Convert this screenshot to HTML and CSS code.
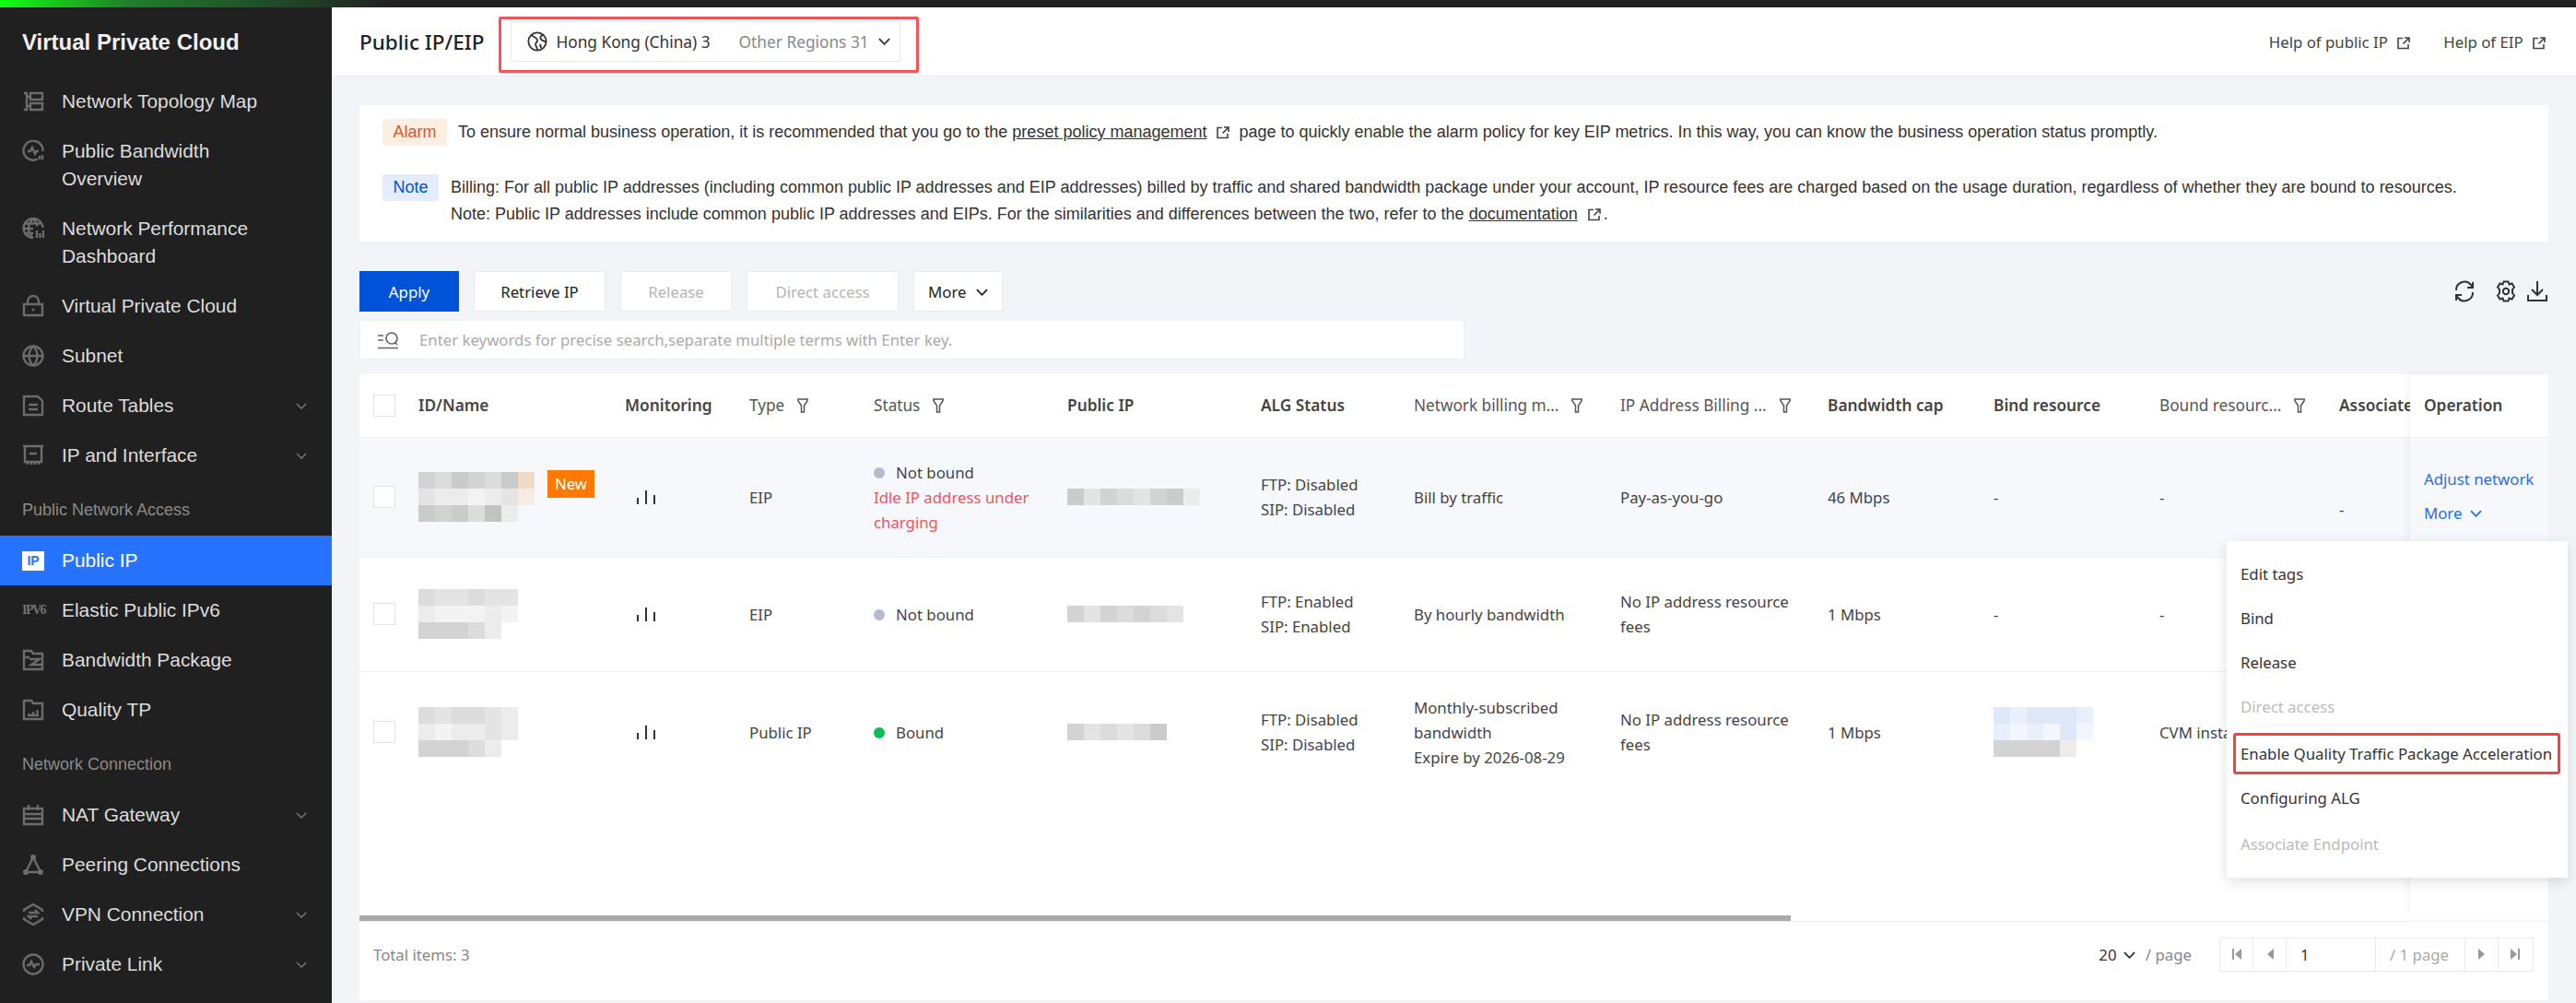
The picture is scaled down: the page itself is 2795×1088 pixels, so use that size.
FILE: index.html
```html
<!DOCTYPE html>
<html lang="en">
<head>
    <meta charset="UTF-8">
    <title>Public IP/EIP</title>
    <link rel="stylesheet" href="styles.css">
</head>
<body>
    <div class="topbar"></div>
    <div class="app">
        <nav class="sidebar">
            <div class="side-title">Virtual Private Cloud</div>
            <a class="side-item">
                <svg class="side-icon" viewBox="0 0 24 24"><path d="M2 3h3v18H2M5 7h3M5 17h3M9 3h13v7H9zM9 14h13v7H9z"/></svg>
                <span>Network Topology Map</span>
            </a>
            <a class="side-item double">
                <svg class="side-icon" viewBox="0 0 24 24"><path d="M17 20.500A10.500 10.500 0 1 1 22.500 12M6 12h3l2-4 3 7 1.500-3H18M19 17v4M22 16v5"/></svg>
                <span>Public Bandwidth<br>Overview</span>
            </a>
            <a class="side-item double">
                <svg class="side-icon" viewBox="0 0 24 24"><path d="M12 22A10.500 10.500 0 1 1 22.500 11M12 1.500C8 5 7 9 7 12s1 7 5 10M12 1.500c3 2 4 5 4.500 8M2 12h10M3 6.500h17M3 17h9M16 14v8M19.500 17v5M23 14v8"/></svg>
                <span>Network Performance<br>Dashboard</span>
            </a>
            <a class="side-item">
                <svg class="side-icon" viewBox="0 0 24 24"><path d="M2 10h20v12H2zM6 10V7a6 6 0 0 1 12 0v3"/><circle class="solid" cx="12" cy="16" r="1.500"/></svg>
                <span>Virtual Private Cloud</span>
            </a>
            <a class="side-item">
                <svg class="side-icon" viewBox="0 0 24 24"><circle cx="12" cy="12" r="10.500"/><path d="M1.500 12h21M12 1.500c-6 6-6 15 0 21M12 1.500c6 6 6 15 0 21"/></svg>
                <span>Subnet</span>
            </a>
            <a class="side-item">
                <svg class="side-icon" viewBox="0 0 24 24"><path d="M2 2h15l5 5v15H2zM7 11h10M7 16h10"/></svg>
                <span>Route Tables</span>
                <svg class="side-arrow" viewBox="0 0 14 8"><path d="M1 1l6 6 6-6"/></svg>
            </a>
            <a class="side-item">
                <svg class="side-icon" viewBox="0 0 24 24"><path d="M1 2h22M3 2v17h18V2M8 10h8M6 19v3M10 19v3M14 19v3M18 19v3"/></svg>
                <span>IP and Interface</span>
                <svg class="side-arrow" viewBox="0 0 14 8"><path d="M1 1l6 6 6-6"/></svg>
            </a>

            <div class="side-section">Public Network Access</div>
            <a class="side-item active">
                <span class="ip-badge">IP</span>
                <span>Public IP</span>
            </a>
            <a class="side-item">
                <span class="v6-badge">IPv6</span>
                <span>Elastic Public IPv6</span>
            </a>
            <a class="side-item">
                <svg class="side-icon" viewBox="0 0 24 24"><path d="M2 2h8l2 3h10v17H2zM2 9h6M8 11h11l-9 6h11"/></svg>
                <span>Bandwidth Package</span>
            </a>
            <a class="side-item">
                <svg class="side-icon" viewBox="0 0 24 24"><path d="M2 2h8l2 3h10v17H2zM6 18h12M7.500 18v-2M12 18v-4M16.500 18v-6"/></svg>
                <span>Quality TP</span>
            </a>

            <div class="side-section">Network Connection</div>
            <a class="side-item">
                <svg class="side-icon" viewBox="0 0 24 24"><path d="M2 5h20v17H2zM7 1v6M17 1v6M2 11h20M2 16h20"/></svg>
                <span>NAT Gateway</span>
                <svg class="side-arrow" viewBox="0 0 14 8"><path d="M1 1l6 6 6-6"/></svg>
            </a>
            <a class="side-item">
                <svg class="side-icon" viewBox="0 0 24 24"><path d="M12 4L4 20h16z"/><circle class="solid" cx="12" cy="4" r="3"/><circle class="solid" cx="4" cy="20" r="3"/><circle class="solid" cx="20" cy="20" r="3"/></svg>
                <span>Peering Connections</span>
            </a>
            <a class="side-item">
                <svg class="side-icon" viewBox="0 0 24 24"><path d="M2 9V7l10-6 10 6v2M2 15v2l10 6 10-6v-2M7 10h10l-3-3M17 14H7l3 3"/></svg>
                <span>VPN Connection</span>
                <svg class="side-arrow" viewBox="0 0 14 8"><path d="M1 1l6 6 6-6"/></svg>
            </a>
            <a class="side-item">
                <svg class="side-icon" viewBox="0 0 24 24"><circle cx="12" cy="12" r="10.500"/><path d="M5 13h3l2-4 3 6 2-3h4"/></svg>
                <span>Private Link</span>
                <svg class="side-arrow" viewBox="0 0 14 8"><path d="M1 1l6 6 6-6"/></svg>
            </a>
        </nav>

        <main class="main">
            <header class="page-head">
                <h1>Public IP/EIP</h1>
                <div class="region-mark">
                    <div class="region">
                        <svg class="globe" viewBox="0 0 24 24"><circle cx="12" cy="12" r="10.500"/><path d="M5 4c2 3 6 3 7 6s-3 3-2 6 2 3 2 6M19 4c-3 1-4 3-3 5s5 2 6 4M16 15c-1 2 0 4 1 5"/></svg>
                        <span class="region-now">Hong Kong (China) 3</span>
                        <span class="region-other">Other Regions 31</span>
                        <svg class="chev" viewBox="0 0 14 8"><path d="M1 1l6 6 6-6"/></svg>
                    </div>
                </div>
                <div class="help-links">
                    <a>Help of public IP <svg class="ext" viewBox="0 0 14 14"><path d="M6 1.500H1v11h11V8M8 1h5v5M13 1L6.500 7.500"/></svg></a>
                    <a>Help of EIP <svg class="ext" viewBox="0 0 14 14"><path d="M6 1.500H1v11h11V8M8 1h5v5M13 1L6.500 7.500"/></svg></a>
                </div>
            </header>

            <section class="notice">
                <div class="notice-row alarm">
                    <span class="tag tag-alarm">Alarm</span>
                    <p>To ensure normal business operation, it is recommended that you go to the <u>preset policy management</u><svg class="ext" viewBox="0 0 14 14"><path d="M6 1.500H1v11h11V8M8 1h5v5M13 1L6.500 7.500"/></svg>page to quickly enable the alarm policy for key EIP metrics. In this way, you can know the business operation status promptly.</p>
                </div>
                <div class="notice-row">
                    <span class="tag tag-note">Note</span>
                    <p>Billing: For all public IP addresses (including common public IP addresses and EIP addresses) billed by traffic and shared bandwidth package under your account, IP resource fees are charged based on the usage duration, regardless of whether they are bound to resources.<br>Note: Public IP addresses include common public IP addresses and EIPs. For the similarities and differences between the two, refer to the <u>documentation</u><svg class="ext tight" viewBox="0 0 14 14"><path d="M6 1.500H1v11h11V8M8 1h5v5M13 1L6.500 7.500"/></svg>.</p>
                </div>
            </section>

            <div class="toolbar">
                <button class="btn primary w-apply">Apply</button>
                <button class="btn w-retrieve">Retrieve IP</button>
                <button class="btn off w-release">Release</button>
                <button class="btn off w-direct">Direct access</button>
                <button class="btn w-more">More <svg class="chev" viewBox="0 0 14 8"><path d="M1 1l6 6 6-6"/></svg></button>
                <div class="tools">
                    <svg class="tool refresh" viewBox="0 0 24 24"><path d="M3 11a9 9 0 0 1 16-6l2 3M21 2v6h-6M21 13a9 9 0 0 1-16 6l-2-3M3 22v-6h6"/></svg>
                    <svg class="tool gear" viewBox="0 0 24 24"><path d="M9.500 1.500h5l1 3 3-1 2.500 4-2 2.500v4l2 2.500-2.500 4-3-1-1 3h-5l-1-3-3 1L3 16.500 5 14v-4L3 7.500l2.500-4 3 1z"/><circle cx="12" cy="12" r="3.200"/></svg>
                    <svg class="tool save" viewBox="0 0 24 24"><path d="M12 1v15M6 10l6 6 6-6M2 16v6h20v-6"/></svg>
                </div>
            </div>

            <div class="search">
                <svg class="search-icon" viewBox="0 0 24 20"><path d="M1 5h6M1 10h6M1 18.500h22M10 8a6 6 0 1 0 12 0a6 6 0 1 0-12 0M19 12l3 3"/></svg>
                <span>Enter keywords for precise search,separate multiple terms with Enter key.</span>
            </div>

            <section class="panel">
                <div class="panel-body">
                    <div class="scroll-area">
                        <table class="grid">
                            <colgroup>
                                <col class="c-check"><col class="c-id"><col class="c-mon"><col class="c-type"><col class="c-status"><col class="c-ip"><col class="c-alg"><col class="c-net"><col class="c-bill"><col class="c-cap"><col class="c-bind"><col class="c-bound"><col class="c-assoc">
                            </colgroup>
                            <thead>
                                <tr>
                                    <th class="check-cell"><span class="check"></span></th>
                                    <th>ID/Name</th>
                                    <th>Monitoring</th>
                                    <th class="soft">Type<svg class="funnel" viewBox="0 0 14 16"><path d="M1 1h12M1.500 2l4 6v7h3V8l4-6"/></svg></th>
                                    <th class="soft">Status<svg class="funnel" viewBox="0 0 14 16"><path d="M1 1h12M1.500 2l4 6v7h3V8l4-6"/></svg></th>
                                    <th>Public IP</th>
                                    <th>ALG Status</th>
                                    <th class="soft">Network billing m...<svg class="funnel" viewBox="0 0 14 16"><path d="M1 1h12M1.500 2l4 6v7h3V8l4-6"/></svg></th>
                                    <th class="soft">IP Address Billing ...<svg class="funnel" viewBox="0 0 14 16"><path d="M1 1h12M1.500 2l4 6v7h3V8l4-6"/></svg></th>
                                    <th>Bandwidth cap</th>
                                    <th>Bind resource</th>
                                    <th class="soft">Bound resourc...<svg class="funnel" viewBox="0 0 14 16"><path d="M1 1h12M1.500 2l4 6v7h3V8l4-6"/></svg></th>
                                    <th>Associate</th>
                                </tr>
                            </thead>
                            <tbody>
                                <tr class="row-a hover">
                                    <td class="check-cell"><span class="check tall"></span></td>
                                    <td>
                                        <div class="id-cell">
                                            <div class="mosaic m-7">
                                                <i class="s3"></i><i class="s4"></i><i class="s2"></i><i class="s3"></i><i class="s4"></i><i class="s2"></i><i class="peach"></i>
                                                <i class="s5"></i><i class="s6"></i><i class="s6"></i><i class="s7"></i><i class="s6"></i><i class="s5"></i><i class="pale"></i>
                                                <i class="s2"></i><i class="s3"></i><i class="s2"></i><i class="s4"></i><i class="s1"></i><i class="s6"></i>
                                            </div>
                                            <span class="new">New</span>
                                        </div>
                                    </td>
                                    <td><svg class="bars" viewBox="0 0 20 17"><path d="M1 9v7M10 1v15M19 6v10"/></svg></td>
                                    <td>EIP</td>
                                    <td>
                                        <div><span class="dot grey"></span>Not bound</div>
                                        <div class="warn">Idle IP address under charging</div>
                                    </td>
                                    <td>
                                        <div class="mosaic m-8 strip">
                                            <i class="s2"></i><i class="s5"></i><i class="s3"></i><i class="s4"></i><i class="s5"></i><i class="s3"></i><i class="s2"></i><i class="s6"></i>
                                        </div>
                                    </td>
                                    <td>FTP: Disabled<br>SIP: Disabled</td>
                                    <td>Bill by traffic</td>
                                    <td>Pay-as-you-go</td>
                                    <td>46 Mbps</td>
                                    <td>-</td>
                                    <td>-</td>
                                    <td class="low">-</td>
                                </tr>
                                <tr class="row-b">
                                    <td class="check-cell"><span class="check tall"></span></td>
                                    <td>
                                        <div class="mosaic m-6">
                                            <i class="s4"></i><i class="s5"></i><i class="s5"></i><i class="s4"></i><i class="s5"></i><i class="s5"></i>
                                            <i class="s6"></i><i class="s7"></i><i class="s7"></i><i class="s7"></i><i class="s6"></i><i class="s7"></i>
                                            <i class="s3"></i><i class="s3"></i><i class="s3"></i><i class="s4"></i><i class="s6"></i>
                                        </div>
                                    </td>
                                    <td><svg class="bars" viewBox="0 0 20 17"><path d="M1 9v7M10 1v15M19 6v10"/></svg></td>
                                    <td>EIP</td>
                                    <td><span class="dot grey"></span>Not bound</td>
                                    <td>
                                        <div class="mosaic m-7 strip">
                                            <i class="s3"></i><i class="s5"></i><i class="s3"></i><i class="s4"></i><i class="s3"></i><i class="s4"></i><i class="s5"></i>
                                        </div>
                                    </td>
                                    <td>FTP: Enabled<br>SIP: Enabled</td>
                                    <td>By hourly bandwidth</td>
                                    <td>No IP address resource fees</td>
                                    <td>1 Mbps</td>
                                    <td>-</td>
                                    <td>-</td>
                                    <td></td>
                                </tr>
                                <tr class="row-c">
                                    <td class="check-cell"><span class="check tall"></span></td>
                                    <td>
                                        <div class="mosaic m-6">
                                            <i class="s4"></i><i class="s5"></i><i class="s4"></i><i class="s4"></i><i class="s5"></i><i class="s6"></i>
                                            <i class="s6"></i><i class="s7"></i><i class="s6"></i><i class="s6"></i><i class="s5"></i><i class="s6"></i>
                                            <i class="s3"></i><i class="s3"></i><i class="s3"></i><i class="s4"></i><i class="s6"></i>
                                        </div>
                                    </td>
                                    <td><svg class="bars" viewBox="0 0 20 17"><path d="M1 9v7M10 1v15M19 6v10"/></svg></td>
                                    <td>Public IP</td>
                                    <td><span class="dot green"></span>Bound</td>
                                    <td>
                                        <div class="mosaic m-6 strip">
                                            <i class="s3"></i><i class="s5"></i><i class="s4"></i><i class="s5"></i><i class="s4"></i><i class="s2"></i>
                                        </div>
                                    </td>
                                    <td>FTP: Disabled<br>SIP: Disabled</td>
                                    <td>Monthly-subscribed bandwidth<br>Expire by 2026-08-29</td>
                                    <td>No IP address resource fees</td>
                                    <td>1 Mbps</td>
                                    <td>
                                        <div class="mosaic m-6">
                                            <i class="b2"></i><i class="b3"></i><i class="b2"></i><i class="b2"></i><i class="b2"></i><i class="b3"></i>
                                            <i class="b3"></i><i class="b4"></i><i class="b3"></i><i class="b4"></i><i class="b2"></i><i class="b4"></i>
                                            <i class="s3"></i><i class="s3"></i><i class="s3"></i><i class="s3"></i><i class="s6"></i>
                                        </div>
                                    </td>
                                    <td>CVM instance</td>
                                    <td></td>
                                </tr>
                            </tbody>
                        </table>
                    </div>
                    <div class="op-col">
                        <div class="op-head">Operation</div>
                        <div class="op-row hover">
                            <a>Adjust network</a>
                            <a>More <svg class="chev" viewBox="0 0 14 8"><path d="M1 1l6 6 6-6"/></svg></a>
                        </div>
                    </div>
                </div>
                <div class="scrollbar"><div class="thumb"></div></div>
                <footer class="panel-foot">
                    <span class="total">Total items: 3</span>
                    <div class="pager">
                        <span class="size">20 <svg class="chev" viewBox="0 0 14 8"><path d="M1 1l6 6 6-6"/></svg></span>
                        <span class="per">/ page</span>
                        <div class="pages">
                            <span class="pg"><svg viewBox="0 0 12 14"><path d="M1 1h2v12H1zM11 1v12L4 7z"/></svg></span>
                            <span class="pg"><svg viewBox="0 0 12 14"><path d="M10 1v12L3 7z"/></svg></span>
                            <span class="pg-input">1</span>
                            <span class="pg-total">/ 1 page</span>
                            <span class="pg"><svg viewBox="0 0 12 14"><path d="M2 1v12l7-6z"/></svg></span>
                            <span class="pg"><svg viewBox="0 0 12 14"><path d="M11 1H9v12h2zM1 1v12l7-6z"/></svg></span>
                        </div>
                    </div>
                </footer>
            </section>

            <ul class="menu">
                <li>Edit tags</li>
                <li>Bind</li>
                <li>Release</li>
                <li class="off">Direct access</li>
                <li class="marked">Enable Quality Traffic Package Acceleration</li>
                <li>Configuring ALG</li>
                <li class="off">Associate Endpoint</li>
            </ul>
        </main>
    </div>
</body>
</html>
```

FILE: styles.css
```css
* {
    box-sizing: border-box;
}
html, body {
    margin: 0;
    height: 100%;
    overflow: hidden;
}
body {
    font-family: "Noto Sans", "Liberation Sans", sans-serif;
    font-size: 16.8px;
    color: #444;
    background-color: #f2f4f8;
}
svg {
    fill: none;
    stroke: currentColor;
}
.topbar {
    height: 8px;
    background: linear-gradient(90deg, #10ff10, #1f7f2a 140px, #204a28 300px, #222 420px);
}
.app {
    display: flex;
    height: 1080px;
}

/* sidebar */
.sidebar {
    width: 360px;
    flex-shrink: 0;
    background-color: #202020;
    color: #dcdcdc;
    font-family: "Liberation Sans", Arial, sans-serif;
    font-size: 20.9px;
}
.side-title {
    height: 75px;
    padding: 0 24px;
    font-size: 24px;
    font-weight: bold;
    line-height: 75px;
    color: #f2f2f2;
}
.side-item {
    display: flex;
    align-items: center;
    height: 54px;
    padding: 0 27px 0 24px;
    line-height: 30px;
}
.side-item > span:nth-child(2) {
    flex: 1;
    margin-left: 19px;
}
.side-item.double {
    height: 84px;
    padding-top: 12px;
    align-items: flex-start;
}
.double .side-icon {
    margin-top: 3px;
}
.side-icon {
    width: 24px;
    height: 24px;
    flex-shrink: 0;
    color: #6c6c6c;
    stroke-width: 2.4;
}
.side-icon .solid {
    fill: currentColor;
    stroke: none;
}
.side-arrow {
    width: 12px;
    height: 7px;
    color: #777;
    stroke-width: 1.6;
}
.side-section {
    height: 60px;
    padding-left: 24px;
    padding-top: 22px;
    font-size: 18px;
    color: #8a8a8a;
    white-space: nowrap;
}
.side-item.active {
    background-color: #2673ff;
    color: #fff;
}
.ip-badge {
    width: 24px;
    height: 21px;
    flex-shrink: 0;
    border: 3px solid #fff;
    background-color: #fff;
    color: #2673ff;
    font-size: 14px;
    font-weight: bold;
    line-height: 15px;
    text-align: center;
}
.v6-badge {
    width: 24px;
    flex-shrink: 0;
    color: #747474;
    font-family: "Liberation Serif", serif;
    font-size: 14px;
    font-weight: bold;
    letter-spacing: -1.5px;
    text-transform: uppercase;
    white-space: nowrap;
}

/* main area */
.main {
    flex: 1;
    min-width: 0;
    position: relative;
    padding: 0 30px;
    display: flex;
    flex-direction: column;
}
.page-head {
    display: flex;
    align-items: center;
    height: 75px;
    margin: 0 -30px;
    padding: 0 30px;
    background-color: #fff;
    border-bottom: 1px solid #eceef2;
}
.page-head h1 {
    margin: 0;
    font-size: 22.5px;
    font-weight: 500;
    color: #222;
    white-space: nowrap;
}
.region-mark {
    align-self: flex-start;
    margin-top: 10px;
    margin-left: 16px;
    padding: 2px 17px 9px 10px;
    border: 3px solid #f5535a;
    border-radius: 2px;
}
.region {
    display: flex;
    align-items: center;
    width: 423px;
    height: 44px;
    padding: 0 10px 0 17px;
    border: 1px solid #e7eaef;
    font-size: 17.3px;
    color: #333;
    white-space: nowrap;
}
.globe {
    width: 22px;
    height: 22px;
    margin-right: 9px;
    flex-shrink: 0;
    stroke-width: 2;
}
.region-other {
    margin-left: 31px;
    color: #888;
}
.chev {
    width: 13px;
    height: 8px;
    stroke-width: 2;
}
.region .chev {
    margin-left: 10px;
    flex-shrink: 0;
}
.help-links {
    margin-left: auto;
    display: flex;
    gap: 33px;
    color: #444;
}
.ext {
    width: 14px;
    height: 14px;
    margin: 0 10px 0 11px;
    vertical-align: -2px;
    stroke-width: 1.6;
    color: #444;
}
.ext.tight {
    margin-right: 3px;
}
.help-links .ext {
    margin: 0 3px 0 6px;
}

/* notice */
.notice {
    height: 148px;
    margin-top: 31px;
    padding: 15px 25px 0;
    background-color: #fff;
    font-family: "Liberation Sans", Arial, sans-serif;
    font-size: 18px;
    color: #333;
}
.notice-row {
    display: flex;
    align-items: flex-start;
    margin-bottom: 30px;
}
.notice-row p {
    margin: 0 0 0 13px;
    line-height: 29.5px;
}
.alarm p {
    margin-left: 12px;
}
.tag {
    height: 29px;
    padding: 0 11.5px;
    border-radius: 2px;
    line-height: 28px;
    flex-shrink: 0;
}
.tag-alarm {
    background-color: #fdeee3;
    color: #d8581c;
}
.tag-note {
    background-color: #e3edfe;
    color: #0052d9;
}

/* toolbar */
.toolbar {
    display: flex;
    align-items: center;
    gap: 16px;
    height: 44px;
    margin-top: 32px;
}
.btn {
    height: 44px;
    padding: 0;
    border: 1px solid #e8ebf0;
    background-color: #fff;
    font: inherit;
    color: #222;
}
.btn.primary {
    background-color: #0052d9;
    border-color: #0052d9;
    color: #fff;
}
.btn.off {
    color: #b5b5b5;
}
.w-apply { width: 108px; }
.w-retrieve { width: 143px; }
.w-release { width: 121px; }
.w-direct { width: 165px; }
.w-more { width: 97px; }
.w-more .chev {
    margin-left: 6px;
    vertical-align: 2px;
}
.tools {
    margin-left: auto;
    display: flex;
    align-items: center;
    color: #333;
}
.tool {
    width: 24px;
    height: 24px;
    stroke-width: 2;
}
.tool.refresh { margin-right: 21px; }
.tool.gear { margin-right: 10px; }

/* search */
.search {
    display: flex;
    align-items: center;
    width: 1199px;
    height: 43px;
    margin-top: 9px;
    padding-left: 18px;
    background-color: #fff;
    border: 1px solid #eef0f4;
    color: #aaa;
}
.search-icon {
    width: 24px;
    height: 20px;
    margin-right: 22px;
    color: #666;
    stroke-width: 1.7;
}

/* table panel */
.panel {
    height: 679px;
    margin-top: 16px;
    display: flex;
    flex-direction: column;
    background-color: #fff;
}
.panel-body {
    flex: 1;
    min-height: 0;
    display: flex;
}
.scroll-area {
    flex: 1;
    min-width: 0;
    overflow: hidden;
}
.grid {
    width: 2233px;
    table-layout: fixed;
    border-collapse: collapse;
}
.c-check { width: 49px; }
.c-id { width: 224px; }
.c-mon { width: 135px; }
.c-type { width: 135px; }
.c-status { width: 210px; }
.c-ip { width: 210px; }
.c-alg { width: 166px; }
.c-net { width: 224px; }
.c-bill { width: 225px; }
.c-cap { width: 180px; }
.c-bind { width: 180px; }
.c-bound { width: 195px; }
.c-assoc { width: 235px; }
.grid th {
    height: 68px;
    padding: 0 15px;
    border-bottom: 1px solid #eef0f4;
    text-align: left;
    font-size: 17.3px;
    font-weight: 600;
    color: #444;
    white-space: nowrap;
}
.grid th.soft {
    font-size: 17.2px;
    font-weight: 400;
    color: #555;
}
.grid td {
    padding: 0 15px;
    border-bottom: 1px solid #eef0f4;
    line-height: 27px;
    color: #444;
    vertical-align: middle;
}
.grid .check-cell {
    padding-right: 0;
}
.row-a { height: 130px; }
.row-b { height: 124px; }
.row-c { height: 132px; }
.row-c td { border-bottom: 0; }
.hover td {
    background-color: #f6f8fc;
}
.check {
    display: block;
    width: 24px;
    height: 24px;
    background-color: #fff;
    border: 1px solid #dfe3ea;
}
.funnel {
    width: 14px;
    height: 16px;
    margin-left: 13px;
    vertical-align: -2px;
    stroke-width: 1.5;
    color: #555;
}
.id-cell {
    display: flex;
    align-items: flex-start;
    gap: 14px;
}
.new {
    width: 51px;
    height: 30px;
    margin-top: -2px;
    background-color: #ff7800;
    color: #fff;
    line-height: 30px;
    text-align: center;
}
.mosaic {
    display: flex;
    flex-wrap: wrap;
    flex-shrink: 0;
}
.mosaic i {
    display: block;
    width: 18px;
    height: 18px;
}
.m-6 { width: 108px; }
.m-7 { width: 126px; }
.m-8 { width: 144px; }
.s1 { background-color: #c2c2c2; }
.s2 { background-color: #cbcbcb; }
.s3 { background-color: #d3d3d3; }
.s4 { background-color: #dcdcdc; }
.s5 { background-color: #e4e4e4; }
.s6 { background-color: #ececec; }
.s7 { background-color: #f3f3f3; }
.peach { background-color: #f0d9c6; }
.pale { background-color: #f7ece4; }
.b2 { background-color: #dfe8f9; }
.b3 { background-color: #e9f0fb; }
.b4 { background-color: #f3f6fd; }
.bars {
    display: block;
    width: 20px;
    height: 17px;
    margin-left: 13px;
    stroke-width: 2;
    color: #333;
}
.dot {
    display: inline-block;
    width: 12px;
    height: 12px;
    margin-right: 12px;
    border-radius: 50%;
}
.dot.grey { background-color: #b6bccb; }
.dot.green { background-color: #0abf5b; }
.warn { color: #f6505a; }
.low { padding-top: 27px !important; }

/* fixed operation column */
.op-col {
    width: 150px;
    flex-shrink: 0;
    background-color: #fff;
    box-shadow: -4px 0 6px rgba(0, 0, 0, 0.04);
}
.op-head {
    height: 69px;
    padding-left: 15px;
    border-bottom: 1px solid #eef0f4;
    font-size: 17.3px;
    line-height: 68px;
    font-weight: 600;
}
.op-row {
    height: 131px;
    padding: 26px 0 0 15px;
    background-color: #f6f8fc;
    border-bottom: 1px solid #eef0f4;
}
.op-row a {
    display: block;
    height: 37px;
    line-height: 37px;
    color: #266fe8;
    white-space: nowrap;
}
.op-row .chev {
    margin-left: 4px;
    vertical-align: 2px;
}
.scrollbar {
    height: 7px;
    border-bottom: 1px solid #eef0f4;
    flex-shrink: 0;
}
.thumb {
    width: 1553px;
    height: 6px;
    background-color: #aaa;
}
.panel-foot {
    display: flex;
    align-items: center;
    justify-content: space-between;
    height: 85px;
    flex-shrink: 0;
    padding: 0 16px 15px 15px;
}
.total {
    color: #888;
}
.pager {
    display: flex;
    align-items: center;
}
.size {
    color: #333;
}
.size .chev {
    margin-left: 3px;
    vertical-align: 2px;
}
.per {
    margin-left: 11px;
    margin-right: 30px;
    color: #888;
}
.pages {
    display: flex;
    width: 341px;
    height: 37px;
    border: 1px solid #e7eaef;
}
.pg {
    display: flex;
    align-items: center;
    justify-content: center;
    width: 36px;
    border-right: 1px solid #e7eaef;
}
.pg:last-child {
    border-right: 0;
}
.pg svg {
    width: 12px;
    height: 14px;
    fill: #999;
    stroke: none;
}
.pg-input {
    width: 97px;
    padding-left: 15px;
    border-right: 1px solid #e7eaef;
    line-height: 35px;
    color: #333;
}
.pg-total {
    width: 97px;
    padding-left: 15px;
    border-right: 1px solid #e7eaef;
    line-height: 35px;
    color: #aaa;
    white-space: nowrap;
}

/* more menu */
.menu {
    position: absolute;
    left: 2056px;
    top: 579px;
    width: 370px;
    height: 365px;
    margin: 0;
    padding: 12px 0 0;
    list-style: none;
    background-color: #fff;
    box-shadow: 0 4px 14px rgba(0, 0, 0, 0.12);
}
.menu li {
    height: 48px;
    padding-left: 15px;
    line-height: 48px;
    color: #333;
    white-space: nowrap;
}
.menu li.off {
    color: #bbb;
}
.menu li.marked {
    height: 45px;
    margin: 4px 8px 2px 7px;
    padding-left: 5px;
    border: 3px solid #ee4444;
    border-radius: 3px;
    line-height: 39px;
}
.menu li:last-child {
    margin-top: 2px;
}
```
